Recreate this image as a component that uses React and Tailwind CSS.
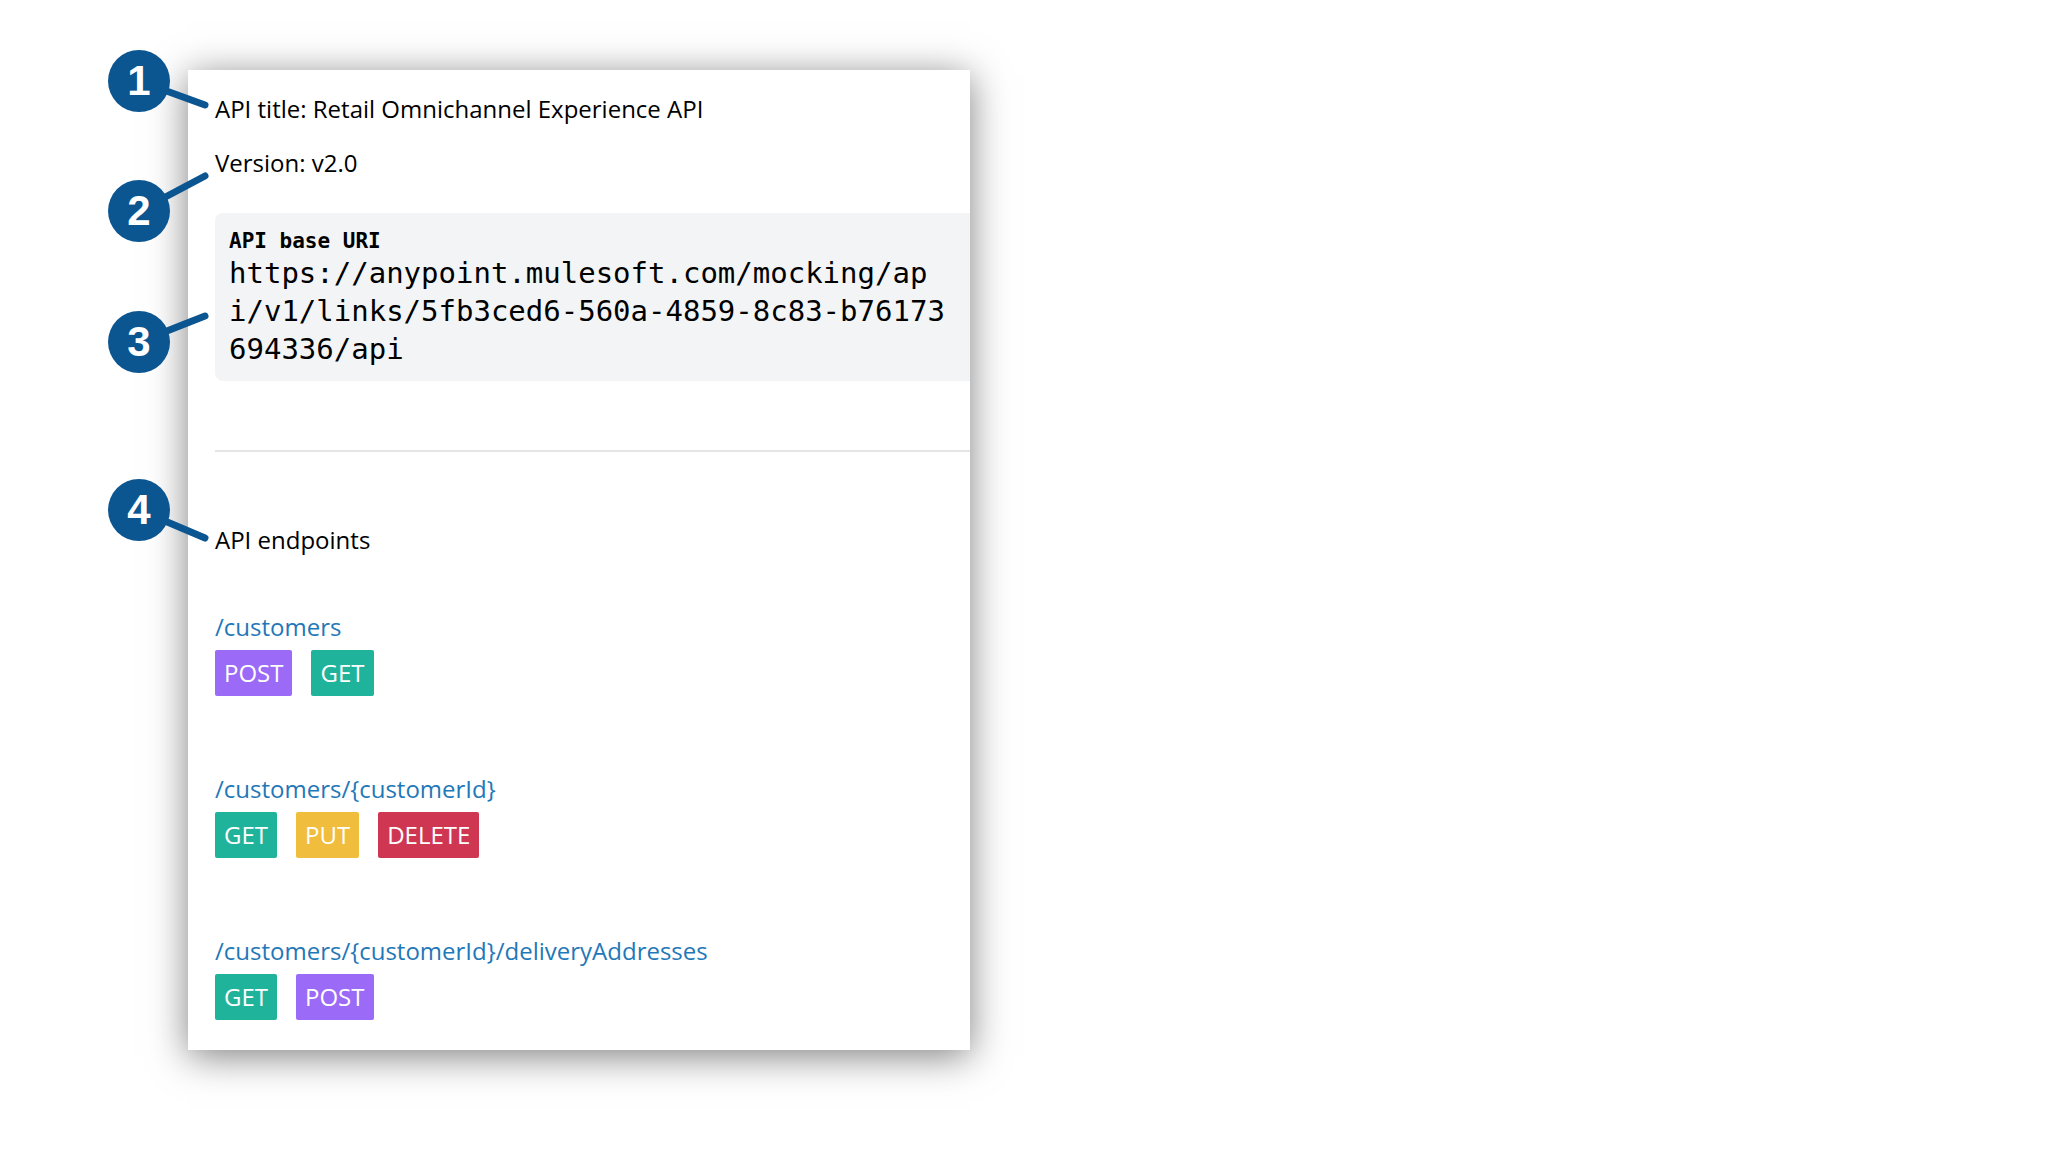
const METHOD_COLORS = {
  GET: "bg-[#1fb39b]",
  POST: "bg-[#9b6af6]",
  PUT: "bg-[#f0bd3c]",
  DELETE: "bg-[#cf3651]",
};

const ENDPOINTS = [
  { path: "/customers", methods: ["POST", "GET"] },
  { path: "/customers/{customerId}", methods: ["GET", "PUT", "DELETE"] },
  { path: "/customers/{customerId}/deliveryAddresses", methods: ["GET", "POST"] },
];

const URI_LINES = [
  "https://anypoint.mulesoft.com/mocking/ap",
  "i/v1/links/5fb3ced6-560a-4859-8c83-b76173",
  "694336/api",
];

// Numbered marker with a leader line; dy is where the line ends relative to the circle's centre.
function Callout({ number, dy, className }) {
  return (
    <div className={`absolute -left-[107px] size-[62px] ${className}`}>
      <svg className="absolute inset-0 overflow-visible" width="62" height="62" aria-hidden="true">
        <line x1="31" y1="31" x2="97" y2={31 + dy} stroke="#0b5591" strokeWidth="7" strokeLinecap="round" />
        <circle cx="31" cy="31" r="31" fill="#0b5591" />
      </svg>
      <span className="relative flex h-full items-center justify-center font-['Liberation_Sans',Arial,sans-serif] text-[42px] leading-none font-bold text-white">
        {number}
      </span>
    </div>
  );
}

function Endpoint({ path, methods }) {
  return (
    <li>
      <a href="#" className="block w-fit text-[#1f78b8]">
        {path}
      </a>
      <div className="mt-[7px] flex flex-wrap gap-[19px]">
        {methods.map((method) => (
          <button
            key={method}
            type="button"
            className={`rounded-xs px-[9px] py-[7px] text-white ${METHOD_COLORS[method]}`}
          >
            {method}
          </button>
        ))}
      </div>
    </li>
  );
}

export default function App() {
  return (
    <div className="min-h-screen bg-white pt-[70px] pb-[108px] pl-[188px]">
      <main className="w-full max-w-[782px] bg-white pt-[23px] pb-[30px] pl-[27px] font-['Open_Sans',sans-serif] text-[24px] leading-[32px] text-black shadow-[0_6px_36px_rgba(0,0,0,0.5)]">
        <div className="relative">
          <Callout number={1} dy={24} className="-top-[43px]" />
          <h1>API title: Retail Omnichannel Experience API</h1>
        </div>
        <div className="relative mt-[22px]">
          <Callout number={2} dy={-35} className="top-[33px]" />
          <p>Version: v2.0</p>
        </div>

        <section className="relative mt-[34px] rounded-l-lg bg-[#f3f4f6] pt-[15px] pb-[13px] pl-[14px] font-['DejaVu_Sans_Mono',monospace]">
          <Callout number={3} dy={-26} className="top-[98px]" />
          <h2 className="text-[21px] leading-[26px] font-bold">API base URI</h2>
          <p className="text-[29px] leading-[38px] whitespace-nowrap">
            {URI_LINES.map((line) => (
              <span key={line} className="block">
                {line}
              </span>
            ))}
          </p>
        </section>

        <hr className="mt-[69px] border-t-2 border-[#e5e5e6]" />

        <section className="relative mt-[72px]">
          <Callout number={4} dy={28} className="-top-[45px]" />
          <h2>API endpoints</h2>
          <ul className="mt-[55px] flex flex-col gap-[77px]">
            {ENDPOINTS.map((endpoint) => (
              <Endpoint key={endpoint.path} {...endpoint} />
            ))}
          </ul>
        </section>
      </main>
    </div>
  );
}
